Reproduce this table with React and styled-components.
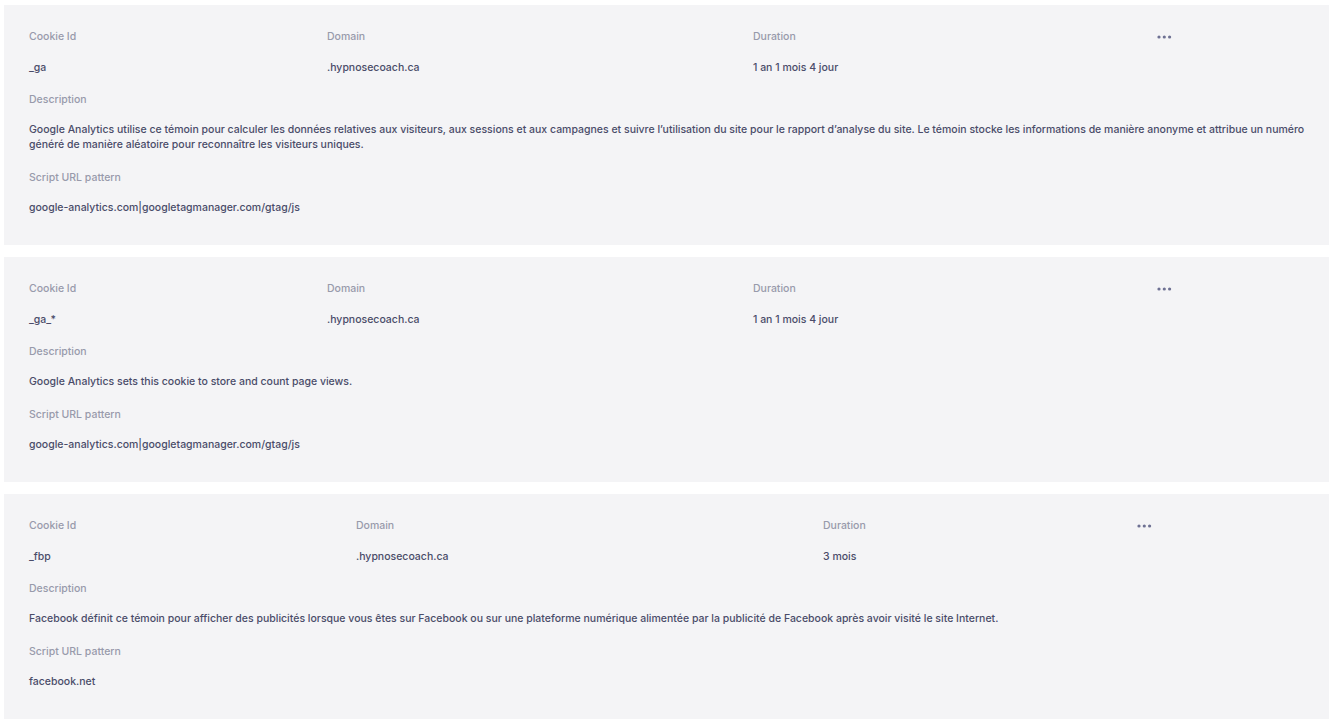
import React from "react";
import styled, { createGlobalStyle } from "styled-components";

const Global = createGlobalStyle`
  html, body { margin: 0; padding: 0; background: #ffffff; }
  body { font-family: Inter, "Noto Sans", "Liberation Sans", sans-serif; -webkit-font-smoothing: antialiased; }
`;

const Page = styled.div`
  display: flex;
  flex-direction: column;
  gap: 12px;
  padding: 5px 5px 5px 4px;
`;

const Card = styled.section`
  background: #f4f4f6;
  padding: 24px 22px 30px 25px;
  display: flex;
  flex-direction: column;
`;

const HeaderGrid = styled.div`
  display: grid;
  grid-template-columns: ${(p) => p.$cols};
  align-items: start;
  margin-bottom: 17px;
`;

const Field = styled.div`
  display: flex;
  flex-direction: column;
  gap: ${(p) => p.$gap || 15}px;
  margin-bottom: ${(p) => p.$after || 0}px;
`;

const Label = styled.div`
  font-size: 10.5px;
  line-height: 15px;
  font-weight: 500;
  color: #989aab;
`;

const Value = styled.div`
  font-size: 10.5px;
  line-height: 15px;
  font-weight: 500;
  color: #4a4c69;
`;

const MoreButton = styled.button`
  background: none;
  border: 0;
  padding: 0;
  height: 15px;
  display: flex;
  align-items: center;
  cursor: pointer;
  color: #6e7193;
`;

const Dots = () => (
  <svg width="15" height="4" viewBox="0 0 15 4" aria-hidden="true">
    <circle cx="2" cy="2" r="1.6" fill="currentColor" />
    <circle cx="7.3" cy="2" r="1.6" fill="currentColor" />
    <circle cx="12.6" cy="2" r="1.6" fill="currentColor" />
  </svg>
);

const cookies = [
  {
    id: "_ga",
    domain: ".hypnosecoach.ca",
    duration: "1 an 1 mois 4 jour",
    description:
      "Google Analytics utilise ce témoin pour calculer les données relatives aux visiteurs, aux sessions et aux campagnes et suivre l’utilisation du site pour le rapport d’analyse du site. Le témoin stocke les informations de manière anonyme et attribue un numéro généré de manière aléatoire pour reconnaître les visiteurs uniques.",
    pattern: "google-analytics.com|googletagmanager.com/gtag/js",
    cols: "298px 426px 404px 1fr",
  },
  {
    id: "_ga_*",
    domain: ".hypnosecoach.ca",
    duration: "1 an 1 mois 4 jour",
    description: "Google Analytics sets this cookie to store and count page views.",
    pattern: "google-analytics.com|googletagmanager.com/gtag/js",
    cols: "298px 426px 404px 1fr",
  },
  {
    id: "_fbp",
    domain: ".hypnosecoach.ca",
    duration: "3 mois",
    description:
      "Facebook définit ce témoin pour afficher des publicités lorsque vous êtes sur Facebook ou sur une plateforme numérique alimentée par la publicité de Facebook après avoir visité le site Internet.",
    pattern: "facebook.net",
    cols: "327px 467px 314px 1fr",
  },
];

export default function App() {
  return (
    <>
      <Global />
      <Page>
        {cookies.map((c) => (
          <Card key={c.id}>
            <HeaderGrid $cols={c.cols}>
              <Field $gap={16}>
                <Label>Cookie Id</Label>
                <Value>{c.id}</Value>
              </Field>
              <Field $gap={16}>
                <Label>Domain</Label>
                <Value>{c.domain}</Value>
              </Field>
              <Field $gap={16}>
                <Label>Duration</Label>
                <Value>{c.duration}</Value>
              </Field>
              <MoreButton aria-label="More actions">
                <Dots />
              </MoreButton>
            </HeaderGrid>
            <Field $after={18}>
              <Label>Description</Label>
              <Value>{c.description}</Value>
            </Field>
            <Field>
              <Label>Script URL pattern</Label>
              <Value>{c.pattern}</Value>
            </Field>
          </Card>
        ))}
      </Page>
    </>
  );
}
